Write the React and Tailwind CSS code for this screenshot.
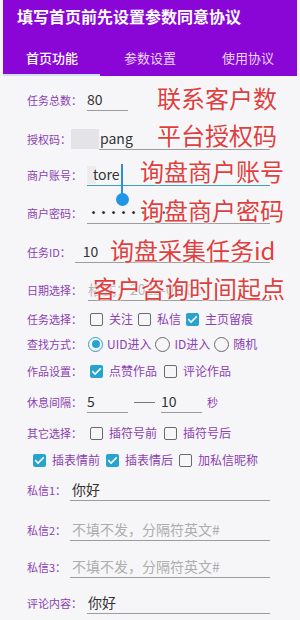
import React from "react";

// 表单标签颜色与字体
const FONT = { fontFamily: '"Noto Sans CJK SC", "Noto Sans", sans-serif' };

const Label = ({ children, className = "" }) => (
  <span className={`text-[11px] leading-none text-[#8b3fb3] whitespace-nowrap ${className}`}>
    {children}
  </span>
);

const Field = ({ className = "", line = "border-[#9c9c9c]", children }) => (
  <div className={`h-[22px] flex items-center border-b ${line} ${className}`}>
    {children}
  </div>
);

const Box = ({ checked }) =>
  checked ? (
    <span className="w-[13px] h-[13px] rounded-[2px] bg-[#27a3cf] flex items-center justify-center shrink-0">
      <svg width="11" height="11" viewBox="0 0 24 24" fill="none" stroke="#fff" strokeWidth="3.5" strokeLinecap="square">
        <path d="M4 12.5l5 5L20 6.5" />
      </svg>
    </span>
  ) : (
    <span className="w-[13px] h-[13px] rounded-[2px] border-[1.5px] border-[#6a6a6a] shrink-0" />
  );

const Check = ({ checked, text }) => (
  <span className="flex items-center gap-[6px]">
    <Box checked={checked} />
    <span className="text-[12px] leading-none text-[#8b3fb3] whitespace-nowrap">{text}</span>
  </span>
);

const Radio = ({ checked, text }) => (
  <span className="flex items-center gap-[4px]">
    {checked ? (
      <span className="w-[15px] h-[15px] rounded-full border-[1.5px] border-[#27a3cf] flex items-center justify-center shrink-0">
        <span className="w-[8px] h-[8px] rounded-full bg-[#27a3cf]" />
      </span>
    ) : (
      <span className="w-[15px] h-[15px] rounded-full border-[1.5px] border-[#6a6a6a] shrink-0" />
    )}
    <span className="text-[12px] leading-none text-[#8b3fb3] whitespace-nowrap">{text}</span>
  </span>
);

const Note = ({ children, className }) => (
  <span
    className={`absolute text-[24px] leading-[28px] text-[#e03f3f] whitespace-nowrap [text-shadow:0_0_2px_#fff,0_0_3px_#fff] ${className}`}
  >
    {children}
  </span>
);

export default function App() {
  return (
    <div className="relative w-[300px] h-[620px] overflow-hidden bg-[#f6f6f8]" style={FONT}>
      {/* 顶部标题栏 */}
      <div className="mx-[3px] h-[76px] bg-[#8a06d6] flex flex-col">
        <div className="h-[32px] pl-[14px] flex items-center text-white text-[16px] font-bold leading-none">
          填写首页前先设置参数同意协议
        </div>
        <div className="flex-1 flex items-center text-[13px] leading-none">
          <span className="flex-1 text-center text-white font-medium pt-[8px]">首页功能</span>
          <span className="flex-1 text-center text-[#e7d6f7] pt-[8px]">参数设置</span>
          <span className="flex-1 text-center text-[#e7d6f7] pt-[8px]">使用协议</span>
        </div>
        <div className="h-[2px] w-[97px] bg-[#cfe0fb]" />
      </div>

      {/* 表单 */}
      <div className="pl-[27px] flex flex-col">
        <div className="mt-[13px] flex items-center gap-[5px]">
          <Label>任务总数：</Label>
          <Field className="w-[41px]">
            <span className="text-[14px] text-[#333]">80</span>
          </Field>
        </div>

        <div className="mt-[17px] flex items-center">
          <Label>授权码：</Label>
          <span className="w-[28px] h-[20px] bg-[#e4e3e8]" />
          <Field className="w-[171px]">
            <span className="text-[14px] text-[#333] pl-[1px]">pang</span>
          </Field>
        </div>

        <div className="mt-[14px] flex items-center gap-[5px]">
          <Label>商户账号：</Label>
          <Field className="w-[183px]" line="border-[#3f9fbe]">
            <span className="w-[9px] h-[18px] bg-[#ececef]" />
            <span className="text-[14px] text-[#333] -ml-[3px]">tore</span>
            <span className="w-[2px] h-[22px] bg-[#2a8fd8] ml-[1px]" />
          </Field>
        </div>

        <div className="mt-[16px] flex items-center gap-[5px]">
          <Label>商户密码：</Label>
          <Field className="w-[183px] pl-[1px]">
            <span className="text-[11px] font-bold text-[#222] tracking-[-1px]">••••••••</span>
          </Field>
        </div>

        <div className="mt-[17px] flex items-center gap-[4px]">
          <Label>任务ID：</Label>
          <Field className="w-[195px] pl-[8px]">
            <span className="text-[14px] text-[#333]">10</span>
          </Field>
        </div>

        <div className="mt-[16px] flex items-center gap-[6px]">
          <Label>日期选择：</Label>
          <Field className="w-[182px]">
            <span className="text-[14px] text-[#b5b5b5]">格式：2022-01-01</span>
          </Field>
        </div>

        <div className="mt-[8px] h-[20px] flex items-center gap-[5px]">
          <Label className="mr-[3px]">任务选择：</Label>
          <Check text="关注" />
          <Check text="私信" />
          <Check checked text="主页留痕" />
        </div>

        <div className="mt-[5px] h-[20px] flex items-center gap-[4px]">
          <Label className="mr-[2px]">查找方式：</Label>
          <Radio checked text="UID进入" />
          <Radio text="ID进入" />
          <Radio text="随机" />
        </div>

        <div className="mt-[7px] h-[20px] flex items-center gap-[7px]">
          <Label className="mr-[1px]">作品设置：</Label>
          <Check checked text="点赞作品" />
          <Check text="评论作品" />
        </div>

        <div className="mt-[10px] flex items-center gap-[5px]">
          <Label>休息间隔：</Label>
          <Field className="w-[41px]">
            <span className="text-[14px] text-[#333]">5</span>
          </Field>
          <span className="w-[21px] h-[1px] bg-[#777] mx-[1px]" />
          <Field className="w-[41px]">
            <span className="text-[14px] text-[#333]">10</span>
          </Field>
          <span className="text-[11px] text-[#8b3fb3]">秒</span>
        </div>

        <div className="mt-[10px] h-[20px] flex items-center gap-[7px]">
          <Label className="mr-[1px]">其它选择：</Label>
          <Check text="插符号前" />
          <Check text="插符号后" />
        </div>

        <div className="mt-[7px] h-[20px] pl-[6px] flex items-center gap-[6px]">
          <Check checked text="插表情前" />
          <Check checked text="插表情后" />
          <Check text="加私信昵称" />
        </div>

        <div className="mt-[9px] flex items-center gap-[4px]">
          <Label>私信1：</Label>
          <Field className="w-[200px] pl-[2px]">
            <span className="text-[14px] text-[#333]">你好</span>
          </Field>
        </div>

        <div className="mt-[18px] flex items-center gap-[4px]">
          <Label>私信2：</Label>
          <Field className="w-[200px] pl-[2px]">
            <span className="text-[14px] text-[#adadad]">不填不发，分隔符英文#</span>
          </Field>
        </div>

        <div className="mt-[15px] flex items-center gap-[4px]">
          <Label>私信3：</Label>
          <Field className="w-[200px] pl-[2px]">
            <span className="text-[14px] text-[#adadad]">不填不发，分隔符英文#</span>
          </Field>
        </div>

        <div className="mt-[14px] flex items-center gap-[5px]">
          <Label>评论内容：</Label>
          <Field className="w-[183px] pl-[1px]">
            <span className="text-[14px] text-[#333]">你好</span>
          </Field>
        </div>
      </div>

      {/* 光标拖动柄 */}
      <span className="absolute left-[116px] top-[193px] w-[13px] h-[13px] rounded-full bg-[#2196e6]" />
      <span className="absolute left-[121px] top-[186px] w-[2px] h-[10px] bg-[#2196e6]" />

      {/* 红色标注 */}
      <Note className="left-[157px] top-[84px]">联系客户数</Note>
      <Note className="left-[157px] top-[121px]">平台授权码</Note>
      <Note className="left-[140px] top-[157px]">询盘商户账号</Note>
      <Note className="left-[140px] top-[196px]">询盘商户密码</Note>
      <Note className="left-[110px] top-[236px]">询盘采集任务id</Note>
      <Note className="left-[93px] top-[274px]">客户咨询时间起点</Note>
    </div>
  );
}
